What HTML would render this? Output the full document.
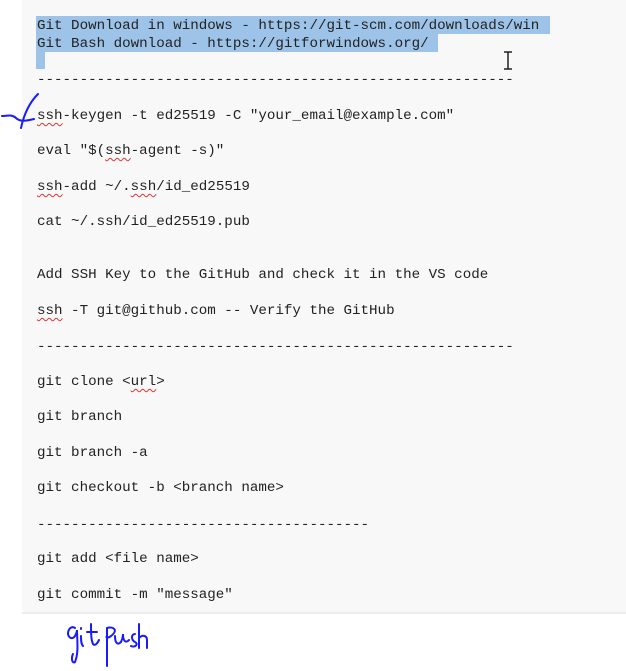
<!DOCTYPE html>
<html><head><meta charset="utf-8"><style>
body{margin:0;width:626px;height:671px;background:#fff;position:relative;overflow:hidden}
#panel{position:absolute;left:22px;top:0;width:604px;height:612px;background:#f8f8f8;border-bottom:2px solid #ececec}
.l{position:absolute;left:37px;font-family:"Liberation Mono",monospace;font-size:14.2px;color:#222;white-space:pre;line-height:18px}
.sel{position:absolute;background:#9dc3e8}
.sq{text-decoration:underline wavy #d33;text-decoration-thickness:1px;text-underline-offset:3px}
</style></head><body>
<div id="panel"></div>
<div class="sel" style="left:36px;top:16px;width:514px;height:18px"></div>
<div class="sel" style="left:36px;top:34px;width:402px;height:18px"></div>
<div class="sel" style="left:36px;top:52px;width:9px;height:17px"></div>
<div class="l" style="top:17px">Git Download in windows - https://git-scm.com/downloads/win</div>
<div class="l" style="top:35px">Git Bash download - https://gitforwindows.org/</div>
<div class="l" style="top:71px">--------------------------------------------------------</div>
<div class="l" style="top:107px"><span class="sq">ssh</span>-keygen -t ed25519 -C "your_email@example.com"</div>
<div class="l" style="top:142px">eval "$(<span class="sq">ssh</span>-agent -s)"</div>
<div class="l" style="top:178px"><span class="sq">ssh</span>-add ~/.<span class="sq">ssh</span>/id_ed25519</div>
<div class="l" style="top:213px">cat ~/.ssh/id_ed25519.pub</div>
<div class="l" style="top:266px">Add SSH Key to the GitHub and check it in the VS code</div>
<div class="l" style="top:302px"><span class="sq">ssh</span> -T git@github.com -- Verify the GitHub</div>
<div class="l" style="top:338px">--------------------------------------------------------</div>
<div class="l" style="top:373px">git clone &lt;<span class="sq">url</span>&gt;</div>
<div class="l" style="top:408px">git branch</div>
<div class="l" style="top:444px">git branch -a</div>
<div class="l" style="top:479px">git checkout -b &lt;branch name&gt;</div>
<div class="l" style="top:516px">---------------------------------------</div>
<div class="l" style="top:550px">git add &lt;file name&gt;</div>
<div class="l" style="top:586px">git commit -m "message"</div>
<svg style="position:absolute;left:500px;top:50px" width="16" height="22"><path d="M4 2h8M8 2v17M4 19h8" stroke="#222" stroke-width="1.5" fill="none"/></svg>
<svg style="position:absolute;left:0;top:90px" width="42" height="40"><path d="M38 4C30 12 24 24 21 38M2 26c5 0 10-2 14 2 4 4 10 3 18 1" stroke="#1a1aff" stroke-width="2" fill="none" stroke-linecap="round"/></svg>
<svg style="position:absolute;left:55px;top:620px" width="150" height="50"><g stroke="#1a1aff" stroke-width="2" fill="none" stroke-linecap="round"><path d="M20 8c-6-4-10 8-4 10 4 1 6-6 6-8 0 10 2 22-2 32-3 2-4-4-2-8"/><path d="M26 16c0 4 0 8 2 10M26 8v1"/><path d="M36 4c0 8 0 16 2 20 2 2 4 0 6-4M32 12h10"/><path d="M52 8v38M52 8c6-2 12 2 4 8-2 2-6 2-4 0M60 16c0 6 2 10 6 6 2-4 2-8 2-8 0 6 2 10 6 6M80 14c-4 0-4 6 0 8 4 2 0 6-4 4M84 4v24M84 18c4-4 8-2 8 2v8"/></g></svg>
</body></html>
